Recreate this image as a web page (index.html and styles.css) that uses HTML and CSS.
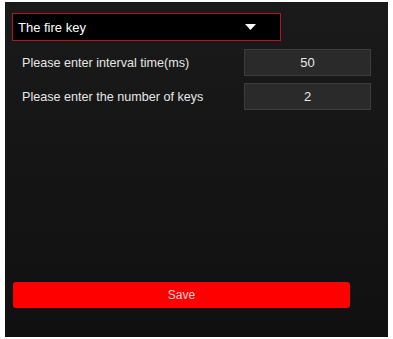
FILE: index.html
```html
<!DOCTYPE html>
<html>
<head>
<meta charset="utf-8">
<link rel="stylesheet" href="styles.css">
</head>
<body>
<div class="panel">
  <div class="select">
    <span class="select-text">The fire key</span>
    <svg class="caret" width="11" height="6" viewBox="0 0 11 6"><polygon points="0,0 11,0 5.5,6" fill="#ffffff"/></svg>
  </div>
  <div class="rows">
    <div class="row">
      <span class="label">Please enter interval time(ms)</span>
      <div class="input">50</div>
    </div>
    <div class="row">
      <span class="label">Please enter the number of keys</span>
      <div class="input">2</div>
    </div>
  </div>
  <div class="spacer"></div>
  <div class="save">Save</div>
</div>
</body>
</html>
```
FILE: styles.css
```css
html, body {
  margin: 0;
  padding: 0;
  background: #ffffff;
}
body {
  font-family: "Liberation Sans", Arial, sans-serif;
}
.panel {
  margin: 2px 5px 2px 5px;
  width: 383px;
  height: 335px;
  box-sizing: border-box;
  background: linear-gradient(#1a1a1a, #101010);
  padding: 11px 17px 29px 7px;
  display: flex;
  flex-direction: column;
}
.select {
  width: 269px;
  height: 28px;
  box-sizing: border-box;
  border: 1px solid #b01818;
  background: #000000;
  display: flex;
  align-items: center;
  justify-content: space-between;
  padding: 0 24px 0 5px;
}
.select-text {
  color: #ffffff;
  font-size: 13px;
}
.caret {
  display: block;
}
.rows {
  display: flex;
  flex-direction: column;
  gap: 7px;
  margin-top: 8px;
  padding-left: 10px;
}
.row {
  display: flex;
  align-items: center;
  justify-content: space-between;
}
.label {
  color: #e6e6e6;
  font-size: 12.6px;
}
.input {
  width: 127px;
  height: 27px;
  box-sizing: border-box;
  background: #2a2a2a;
  border: 1px solid #3c3c3c;
  color: #e8e8e8;
  font-size: 13px;
  display: flex;
  align-items: center;
  justify-content: center;
}
.spacer {
  flex: 1;
}
.save {
  margin-left: 1px;
  width: 337px;
  height: 26px;
  background: #ff0000;
  border-radius: 3px;
  color: #ffd6d6;
  font-size: 12px;
  display: flex;
  align-items: center;
  justify-content: center;
}
```
